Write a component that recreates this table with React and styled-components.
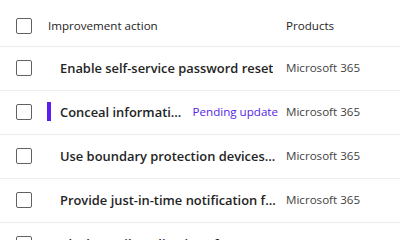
import styled, { createGlobalStyle } from "styled-components";

const Global = createGlobalStyle`
  body {
    margin: 0;
    background: #ffffff;
    font-family: "Open Sans", "Noto Sans", sans-serif;
    color: #242424;
  }
`;

const Table = styled.div`
  width: 400px;
  height: 240px;
  overflow: hidden;
  background: #ffffff;
`;

const Row = styled.div`
  display: grid;
  grid-template-columns: 48px 238px 1fr;
  align-items: center;
  box-sizing: border-box;
  height: ${props => (props.header ? "47px" : "44px")};
  padding-top: ${props => (props.header ? "5px" : "0")};
  padding-bottom: ${props => (props.header ? "0" : "2px")};
  border-bottom: 1px solid #ececec;
`;

const CheckCell = styled.div`
  display: flex;
  align-items: center;
  padding-left: 16px;
`;

const Checkbox = styled.div`
  width: 14px;
  height: 14px;
  border: 1px solid #616161;
  border-radius: 2px;
`;

const HeadText = styled.span`
  font-size: 11.6px;
  font-weight: 400;
  color: #242424;
`;

const TitleCell = styled.div`
  display: flex;
  align-items: center;
  min-width: 0;
  padding-right: 8px;
`;

const Marker = styled.div`
  flex: none;
  width: 12px;
  height: 19px;
  position: relative;
  &::before {
    content: "";
    display: ${props => (props.active ? "block" : "none")};
    position: absolute;
    left: -1px;
    top: 0;
    width: 4px;
    height: 19px;
    background: #5b1ff0;
  }
`;

const Title = styled.span`
  font-size: 12.9px;
  font-weight: 600;
  white-space: nowrap;
  overflow: hidden;
  text-overflow: ellipsis;
  min-width: 0;
`;

const Status = styled.span`
  flex: none;
  margin-left: 4px;
  font-size: 11.6px;
  font-weight: 500;
  color: #5525e6;
  white-space: nowrap;
`;

const Product = styled.span`
  font-size: 11.6px;
  color: #424242;
  white-space: nowrap;
`;

const rows = [
  { title: "Enable self-service password reset" },
  { title: "Conceal information with screen lock", status: "Pending update" },
  { title: "Use boundary protection devices for unclassified" },
  { title: "Provide just-in-time notification for system" },
  { title: "Block email applications from creating" },
];

export default function App() {
  return (
    <Table>
      <Global />
      <Row header>
        <CheckCell><Checkbox /></CheckCell>
        <HeadText>Improvement action</HeadText>
        <HeadText>Products</HeadText>
      </Row>
      {rows.map(r => (
        <Row key={r.title}>
          <CheckCell><Checkbox /></CheckCell>
          <TitleCell>
            <Marker active={!!r.status} />
            <Title>{r.title}</Title>
            {r.status && <Status>{r.status}</Status>}
          </TitleCell>
          <Product>Microsoft 365</Product>
        </Row>
      ))}
    </Table>
  );
}
